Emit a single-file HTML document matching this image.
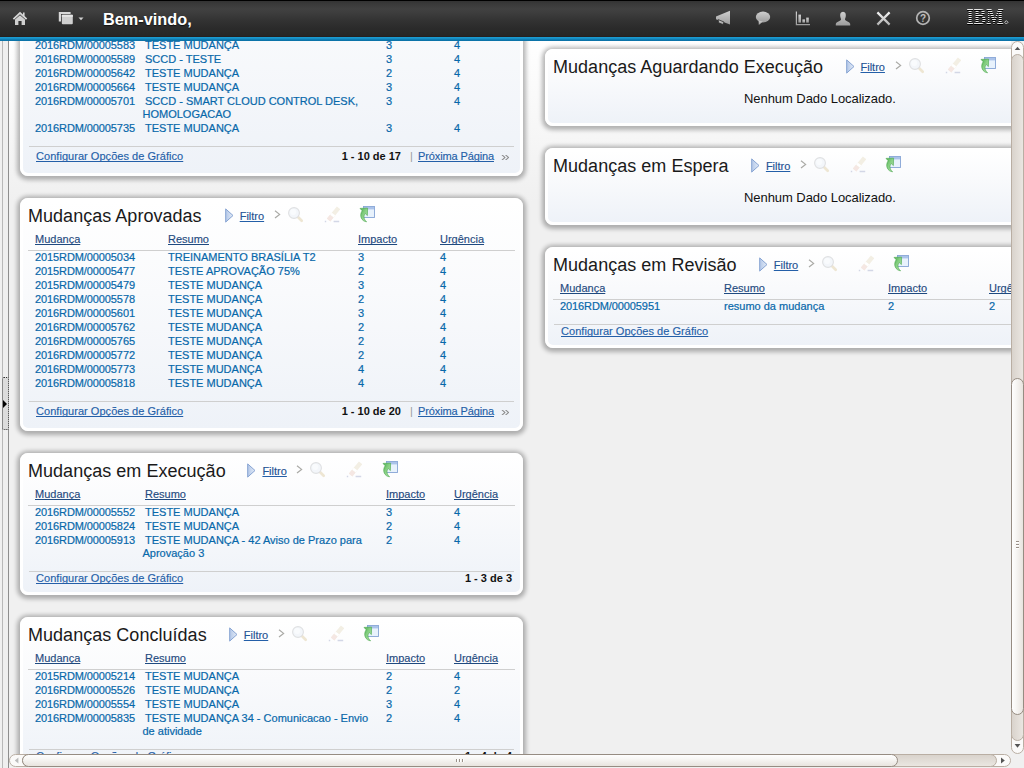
<!DOCTYPE html>
<html lang="pt-BR"><head><meta charset="utf-8"><title>Centro de Início</title>
<style>
*{box-sizing:border-box;margin:0;padding:0}
html,body{width:1024px;height:768px;overflow:hidden}
body{position:relative;text-decoration-skip-ink:none;font-family:"Liberation Sans",sans-serif;font-size:11px;color:#000;background:#f0f0f0}
#bg{position:absolute;left:0;top:41px;width:1024px;height:727px;background:linear-gradient(#fff 0,#f0f0f0 160px,#f0f0f0 100%)}
#hdr{position:absolute;left:0;top:0;width:1024px;height:41px;background:linear-gradient(#000 0,#000 1px,#333 1px,#3a3a3a 4px,#414141 9px,#3d3d3d 13px,#333 20px,#2b2b2b 28px,#262626 36px,#231f1f 36.7px,#1b9cd2 36.7px,#1a97cd 38px,#0e7db3 39.5px,#0a6fa3 41px);z-index:20}
#hdr .w{position:absolute;left:103px;top:9px;font-size:16.3px;font-weight:bold;color:#fff;text-shadow:0 1px 1px rgba(0,0,0,.6);line-height:20px;white-space:nowrap}
#hdr svg{position:absolute}
#strip{position:absolute;left:0;top:41px;width:9px;height:727px;background:linear-gradient(90deg,#f0f0f0 0,#f0f0f0 2px,#b8b8b8 2px,#b8b8b8 3px,#efefef 3px,#efefef 8px,#8e8e8e 8px,#8e8e8e 9px);z-index:5}
#grip{position:absolute;left:2px;top:377px;width:7px;height:53px;border:1px dotted #333;border-radius:2px;background:#dcdcdc;z-index:6}
#grip:after{content:"";position:absolute;left:0px;top:22px;border-left:4px solid #000;border-top:4px solid transparent;border-bottom:4px solid transparent}
.card{position:absolute;border:3px solid #fff;border-radius:8px;background:linear-gradient(#ffffff 0,#f9fafc 40%,#eef2f8 100%);box-shadow:0 1px 4px 2.5px rgba(0,0,0,.28)}
.card .t{position:relative;top:4px;flex:none;letter-spacing:.03px;font-size:18px;line-height:22px;color:#1a1a1a;white-space:nowrap}
.hd{position:absolute;left:5px;top:0;display:flex;white-space:nowrap}
.tb{position:absolute;top:5px;height:20px;width:160px}
.tb svg{position:absolute}
.tb a{position:absolute;left:15px;top:4px;font-size:11px;line-height:13px;color:#234f8e;text-decoration:underline}
a{color:#245fa8;text-decoration:underline;-webkit-text-stroke:.15px #245fa8}
.h{position:absolute;white-space:nowrap;line-height:13px;color:#1f4a80;text-decoration:underline;-webkit-text-stroke:.15px #1f4a80}
.c{position:absolute;white-space:nowrap;line-height:13px;color:#0868aa;-webkit-text-stroke:.2px #0868aa}
.c.id{letter-spacing:-.1px}
.sep{position:absolute;height:1px;background:#cfcfcf}
.f{position:absolute;white-space:nowrap;line-height:13px}
.fb{font-weight:bold;color:#111}
.nd{position:absolute;font-size:13px;line-height:15px;color:#111;white-space:nowrap;letter-spacing:-.06px}
#vs{position:absolute;left:1011px;top:41px;width:13px;height:713px;background:#f0f0f0;z-index:10}
#hs{position:absolute;left:9px;top:754px;width:1015px;height:14px;background:#f0f0f0;z-index:10}
</style></head>
<body>
<div id="bg"></div>
<div class="card" style="left:20px;top:-70px;width:503px;height:246px"><div class="c id" style="left:12px;top:106px">2016RDM/00005583</div><div class="c" style="left:122px;top:106px">TESTE MUDANÇA</div><div class="c" style="left:363px;top:106px">3</div><div class="c" style="left:431px;top:106px">4</div><div class="c id" style="left:12px;top:120px">2016RDM/00005589</div><div class="c" style="left:122px;top:120px">SCCD - TESTE</div><div class="c" style="left:363px;top:120px">3</div><div class="c" style="left:431px;top:120px">4</div><div class="c id" style="left:12px;top:134px">2016RDM/00005642</div><div class="c" style="left:122px;top:134px">TESTE MUDANÇA</div><div class="c" style="left:363px;top:134px">2</div><div class="c" style="left:431px;top:134px">4</div><div class="c id" style="left:12px;top:148px">2016RDM/00005664</div><div class="c" style="left:122px;top:148px">TESTE MUDANÇA</div><div class="c" style="left:363px;top:148px">3</div><div class="c" style="left:431px;top:148px">4</div><div class="c id" style="left:12px;top:162px">2016RDM/00005701</div><div class="c" style="left:122px;top:162px">SCCD - SMART CLOUD CONTROL DESK,</div><div class="c" style="left:119.5px;top:175px">HOMOLOGACAO</div><div class="c" style="left:363px;top:162px">3</div><div class="c" style="left:431px;top:162px">4</div><div class="c id" style="left:12px;top:189px">2016RDM/00005735</div><div class="c" style="left:122px;top:189px">TESTE MUDANÇA</div><div class="c" style="left:363px;top:189px">3</div><div class="c" style="left:431px;top:189px">4</div><div class="sep" style="left:6px;right:6px;top:213px"></div><div class="f" style="left:13px;top:217px;letter-spacing:.04px"><a>Configurar Opções de Gráfico</a></div><div class="f fb" style="right:119px;top:217px">1 - 10 de 17</div><div class="f" style="left:387px;top:217px;color:#9a9a9a">|</div><div class="f" style="left:395px;top:217px;letter-spacing:-.12px"><a>Próxima Página</a></div><div class="f" style="left:478px;top:217px;color:#8c8c8c;font-size:13px;transform:scaleX(1.2);transform-origin:0 0">»</div></div>
<div class="card" style="left:20px;top:198px;width:503px;height:233px"><div class="hd"><div class="t">Mudanças Aprovadas</div></div><div class="tb" style="left:201.7px"><svg style="left:0;top:2px" width="9" height="15" viewBox="0 0 9 15"><defs><linearGradient id="tg" x1="0" x2="1"><stop offset="0" stop-color="#b4c8e8"/><stop offset="1" stop-color="#e3ebf7"/></linearGradient></defs><path d="M0.7 0.9 L8 7.5 L0.7 14.1 Z" fill="url(#tg)" stroke="#86a3d2" stroke-width="1"/></svg><a>Filtro</a><svg style="left:49px;top:4px" width="7" height="9" viewBox="0 0 7 9"><path d="M1 0.8 L5.6 4.4 L1 8" fill="none" stroke="#aaaaa6" stroke-width="1.2"/></svg><svg style="left:62px;top:0px" width="17" height="17" viewBox="0 0 17 17"><path d="M11.2 11.2 L14.7 14.7" stroke="#eee6d3" stroke-width="2.7" stroke-linecap="round"/><circle cx="7" cy="7" r="5.4" fill="#f3f6fa" stroke="#dfe0e2" stroke-width="1.1"/><circle cx="6.2" cy="6" r="3" fill="#f9fbfd"/></svg><svg style="left:99px;top:-1px" width="16" height="18" viewBox="0 0 16 18"><path d="M4.6 15 L14.6 2.8" stroke="#f3efe4" stroke-width="4.4"/><path d="M4.6 15 L7.6 11.3" stroke="#f5e7e3" stroke-width="4.4"/><path d="M7.9 11 L9.5 9" stroke="#ffffff" stroke-width="4.4"/><path d="M0.8 16.6 H2.2 M9.6 16.6 H15.2" stroke="#d3d7e6" stroke-width="1.5"/></svg><svg style="left:134.5px;top:0px" width="17" height="18" viewBox="0 0 17 18"><defs><linearGradient id="gg" x1="0" x2="1" y1="0" y2="1"><stop offset="0" stop-color="#4daf50"/><stop offset=".45" stop-color="#86cf82"/><stop offset="1" stop-color="#b2e0ac"/></linearGradient></defs><rect x="4.5" y="0.5" width="11" height="11" fill="#e8f2fc" stroke="#86a4d6" stroke-width=".9"/><rect x="5" y="1" width="10" height="2.4" fill="#abc3ea"/><path d="M1 2.4 L8.6 2.1 L8.4 9.6 L6.3 7.6 C4.4 9.6 4.4 13 7.6 15.8 C2.6 15.4 -0.2 9.6 3.2 4.8 Z" fill="url(#gg)" stroke="#48a64c" stroke-width=".6"/></svg></div><div class="h" style="left:12px;top:32px">Mudança</div><div class="h" style="left:145px;top:32px">Resumo</div><div class="h" style="left:335px;top:32px">Impacto</div><div class="h" style="left:417px;top:32px">Urgência</div><div class="sep" style="left:5px;right:5px;top:49px"></div><div class="c id" style="left:12px;top:50px">2015RDM/00005034</div><div class="c" style="left:145px;top:50px">TREINAMENTO BRASÍLIA T2</div><div class="c" style="left:335px;top:50px">3</div><div class="c" style="left:417px;top:50px">4</div><div class="c id" style="left:12px;top:64px">2015RDM/00005477</div><div class="c" style="left:145px;top:64px">TESTE APROVAÇÃO 75%</div><div class="c" style="left:335px;top:64px">2</div><div class="c" style="left:417px;top:64px">4</div><div class="c id" style="left:12px;top:78px">2015RDM/00005479</div><div class="c" style="left:145px;top:78px">TESTE MUDANÇA</div><div class="c" style="left:335px;top:78px">3</div><div class="c" style="left:417px;top:78px">4</div><div class="c id" style="left:12px;top:92px">2016RDM/00005578</div><div class="c" style="left:145px;top:92px">TESTE MUDANÇA</div><div class="c" style="left:335px;top:92px">2</div><div class="c" style="left:417px;top:92px">4</div><div class="c id" style="left:12px;top:106px">2016RDM/00005601</div><div class="c" style="left:145px;top:106px">TESTE MUDANÇA</div><div class="c" style="left:335px;top:106px">3</div><div class="c" style="left:417px;top:106px">4</div><div class="c id" style="left:12px;top:120px">2016RDM/00005762</div><div class="c" style="left:145px;top:120px">TESTE MUDANÇA</div><div class="c" style="left:335px;top:120px">2</div><div class="c" style="left:417px;top:120px">4</div><div class="c id" style="left:12px;top:134px">2016RDM/00005765</div><div class="c" style="left:145px;top:134px">TESTE MUDANÇA</div><div class="c" style="left:335px;top:134px">2</div><div class="c" style="left:417px;top:134px">4</div><div class="c id" style="left:12px;top:148px">2016RDM/00005772</div><div class="c" style="left:145px;top:148px">TESTE MUDANÇA</div><div class="c" style="left:335px;top:148px">2</div><div class="c" style="left:417px;top:148px">4</div><div class="c id" style="left:12px;top:162px">2016RDM/00005773</div><div class="c" style="left:145px;top:162px">TESTE MUDANÇA</div><div class="c" style="left:335px;top:162px">4</div><div class="c" style="left:417px;top:162px">4</div><div class="c id" style="left:12px;top:176px">2016RDM/00005818</div><div class="c" style="left:145px;top:176px">TESTE MUDANÇA</div><div class="c" style="left:335px;top:176px">4</div><div class="c" style="left:417px;top:176px">4</div><div class="sep" style="left:6px;right:6px;top:200px"></div><div class="f" style="left:13px;top:204px;letter-spacing:.04px"><a>Configurar Opções de Gráfico</a></div><div class="f fb" style="right:119px;top:204px">1 - 10 de 20</div><div class="f" style="left:387px;top:204px;color:#9a9a9a">|</div><div class="f" style="left:395px;top:204px;letter-spacing:-.12px"><a>Próxima Página</a></div><div class="f" style="left:478px;top:204px;color:#8c8c8c;font-size:13px;transform:scaleX(1.2);transform-origin:0 0">»</div></div>
<div class="card" style="left:20px;top:453px;width:503px;height:142px"><div class="hd"><div class="t">Mudanças em Execução</div></div><div class="tb" style="left:224.4px"><svg style="left:0;top:2px" width="9" height="15" viewBox="0 0 9 15"><defs><linearGradient id="tg" x1="0" x2="1"><stop offset="0" stop-color="#b4c8e8"/><stop offset="1" stop-color="#e3ebf7"/></linearGradient></defs><path d="M0.7 0.9 L8 7.5 L0.7 14.1 Z" fill="url(#tg)" stroke="#86a3d2" stroke-width="1"/></svg><a>Filtro</a><svg style="left:49px;top:4px" width="7" height="9" viewBox="0 0 7 9"><path d="M1 0.8 L5.6 4.4 L1 8" fill="none" stroke="#aaaaa6" stroke-width="1.2"/></svg><svg style="left:62px;top:0px" width="17" height="17" viewBox="0 0 17 17"><path d="M11.2 11.2 L14.7 14.7" stroke="#eee6d3" stroke-width="2.7" stroke-linecap="round"/><circle cx="7" cy="7" r="5.4" fill="#f3f6fa" stroke="#dfe0e2" stroke-width="1.1"/><circle cx="6.2" cy="6" r="3" fill="#f9fbfd"/></svg><svg style="left:99px;top:-1px" width="16" height="18" viewBox="0 0 16 18"><path d="M4.6 15 L14.6 2.8" stroke="#f3efe4" stroke-width="4.4"/><path d="M4.6 15 L7.6 11.3" stroke="#f5e7e3" stroke-width="4.4"/><path d="M7.9 11 L9.5 9" stroke="#ffffff" stroke-width="4.4"/><path d="M0.8 16.6 H2.2 M9.6 16.6 H15.2" stroke="#d3d7e6" stroke-width="1.5"/></svg><svg style="left:134.5px;top:0px" width="17" height="18" viewBox="0 0 17 18"><defs><linearGradient id="gg" x1="0" x2="1" y1="0" y2="1"><stop offset="0" stop-color="#4daf50"/><stop offset=".45" stop-color="#86cf82"/><stop offset="1" stop-color="#b2e0ac"/></linearGradient></defs><rect x="4.5" y="0.5" width="11" height="11" fill="#e8f2fc" stroke="#86a4d6" stroke-width=".9"/><rect x="5" y="1" width="10" height="2.4" fill="#abc3ea"/><path d="M1 2.4 L8.6 2.1 L8.4 9.6 L6.3 7.6 C4.4 9.6 4.4 13 7.6 15.8 C2.6 15.4 -0.2 9.6 3.2 4.8 Z" fill="url(#gg)" stroke="#48a64c" stroke-width=".6"/></svg></div><div class="h" style="left:12px;top:32px">Mudança</div><div class="h" style="left:122px;top:32px">Resumo</div><div class="h" style="left:363px;top:32px">Impacto</div><div class="h" style="left:431px;top:32px">Urgência</div><div class="sep" style="left:5px;right:5px;top:49px"></div><div class="c id" style="left:12px;top:50px">2016RDM/00005552</div><div class="c" style="left:122px;top:50px">TESTE MUDANÇA</div><div class="c" style="left:363px;top:50px">3</div><div class="c" style="left:431px;top:50px">4</div><div class="c id" style="left:12px;top:64px">2016RDM/00005824</div><div class="c" style="left:122px;top:64px">TESTE MUDANÇA</div><div class="c" style="left:363px;top:64px">2</div><div class="c" style="left:431px;top:64px">4</div><div class="c id" style="left:12px;top:78px">2016RDM/00005913</div><div class="c" style="left:122px;top:78px">TESTE MUDANÇA - 42 Aviso de Prazo para</div><div class="c" style="left:119.5px;top:91px">Aprovação 3</div><div class="c" style="left:363px;top:78px">2</div><div class="c" style="left:431px;top:78px">4</div><div class="sep" style="left:6px;right:6px;top:115px"></div><div class="f" style="left:13px;top:116px;letter-spacing:.04px"><a>Configurar Opções de Gráfico</a></div><div class="f fb" style="right:8px;top:116px">1 - 3 de 3</div></div>
<div class="card" style="left:20px;top:617px;width:503px;height:156px"><div class="hd"><div class="t">Mudanças Concluídas</div></div><div class="tb" style="left:205.8px"><svg style="left:0;top:2px" width="9" height="15" viewBox="0 0 9 15"><defs><linearGradient id="tg" x1="0" x2="1"><stop offset="0" stop-color="#b4c8e8"/><stop offset="1" stop-color="#e3ebf7"/></linearGradient></defs><path d="M0.7 0.9 L8 7.5 L0.7 14.1 Z" fill="url(#tg)" stroke="#86a3d2" stroke-width="1"/></svg><a>Filtro</a><svg style="left:49px;top:4px" width="7" height="9" viewBox="0 0 7 9"><path d="M1 0.8 L5.6 4.4 L1 8" fill="none" stroke="#aaaaa6" stroke-width="1.2"/></svg><svg style="left:62px;top:0px" width="17" height="17" viewBox="0 0 17 17"><path d="M11.2 11.2 L14.7 14.7" stroke="#eee6d3" stroke-width="2.7" stroke-linecap="round"/><circle cx="7" cy="7" r="5.4" fill="#f3f6fa" stroke="#dfe0e2" stroke-width="1.1"/><circle cx="6.2" cy="6" r="3" fill="#f9fbfd"/></svg><svg style="left:99px;top:-1px" width="16" height="18" viewBox="0 0 16 18"><path d="M4.6 15 L14.6 2.8" stroke="#f3efe4" stroke-width="4.4"/><path d="M4.6 15 L7.6 11.3" stroke="#f5e7e3" stroke-width="4.4"/><path d="M7.9 11 L9.5 9" stroke="#ffffff" stroke-width="4.4"/><path d="M0.8 16.6 H2.2 M9.6 16.6 H15.2" stroke="#d3d7e6" stroke-width="1.5"/></svg><svg style="left:134.5px;top:0px" width="17" height="18" viewBox="0 0 17 18"><defs><linearGradient id="gg" x1="0" x2="1" y1="0" y2="1"><stop offset="0" stop-color="#4daf50"/><stop offset=".45" stop-color="#86cf82"/><stop offset="1" stop-color="#b2e0ac"/></linearGradient></defs><rect x="4.5" y="0.5" width="11" height="11" fill="#e8f2fc" stroke="#86a4d6" stroke-width=".9"/><rect x="5" y="1" width="10" height="2.4" fill="#abc3ea"/><path d="M1 2.4 L8.6 2.1 L8.4 9.6 L6.3 7.6 C4.4 9.6 4.4 13 7.6 15.8 C2.6 15.4 -0.2 9.6 3.2 4.8 Z" fill="url(#gg)" stroke="#48a64c" stroke-width=".6"/></svg></div><div class="h" style="left:12px;top:32px">Mudança</div><div class="h" style="left:122px;top:32px">Resumo</div><div class="h" style="left:363px;top:32px">Impacto</div><div class="h" style="left:431px;top:32px">Urgência</div><div class="sep" style="left:5px;right:5px;top:49px"></div><div class="c id" style="left:12px;top:50px">2015RDM/00005214</div><div class="c" style="left:122px;top:50px">TESTE MUDANÇA</div><div class="c" style="left:363px;top:50px">2</div><div class="c" style="left:431px;top:50px">4</div><div class="c id" style="left:12px;top:64px">2016RDM/00005526</div><div class="c" style="left:122px;top:64px">TESTE MUDANÇA</div><div class="c" style="left:363px;top:64px">2</div><div class="c" style="left:431px;top:64px">2</div><div class="c id" style="left:12px;top:78px">2016RDM/00005554</div><div class="c" style="left:122px;top:78px">TESTE MUDANÇA</div><div class="c" style="left:363px;top:78px">3</div><div class="c" style="left:431px;top:78px">4</div><div class="c id" style="left:12px;top:92px">2016RDM/00005835</div><div class="c" style="left:122px;top:92px">TESTE MUDANÇA 34 - Comunicacao - Envio</div><div class="c" style="left:119.5px;top:105px">de atividade</div><div class="c" style="left:363px;top:92px">2</div><div class="c" style="left:431px;top:92px">4</div><div class="sep" style="left:6px;right:6px;top:129px"></div><div class="f" style="left:13px;top:130px;letter-spacing:.04px"><a>Configurar Opções de Gráfico</a></div><div class="f fb" style="right:8px;top:130px">1 - 4 de 4</div></div>
<div class="card" style="left:545px;top:49px;width:551px;height:77px"><div class="hd"><div class="t">Mudanças Aguardando Execução</div></div><div class="tb" style="left:297.5px"><svg style="left:0;top:2px" width="9" height="15" viewBox="0 0 9 15"><defs><linearGradient id="tg" x1="0" x2="1"><stop offset="0" stop-color="#b4c8e8"/><stop offset="1" stop-color="#e3ebf7"/></linearGradient></defs><path d="M0.7 0.9 L8 7.5 L0.7 14.1 Z" fill="url(#tg)" stroke="#86a3d2" stroke-width="1"/></svg><a>Filtro</a><svg style="left:49px;top:4px" width="7" height="9" viewBox="0 0 7 9"><path d="M1 0.8 L5.6 4.4 L1 8" fill="none" stroke="#aaaaa6" stroke-width="1.2"/></svg><svg style="left:62px;top:0px" width="17" height="17" viewBox="0 0 17 17"><path d="M11.2 11.2 L14.7 14.7" stroke="#eee6d3" stroke-width="2.7" stroke-linecap="round"/><circle cx="7" cy="7" r="5.4" fill="#f3f6fa" stroke="#dfe0e2" stroke-width="1.1"/><circle cx="6.2" cy="6" r="3" fill="#f9fbfd"/></svg><svg style="left:99px;top:-1px" width="16" height="18" viewBox="0 0 16 18"><path d="M4.6 15 L14.6 2.8" stroke="#f3efe4" stroke-width="4.4"/><path d="M4.6 15 L7.6 11.3" stroke="#f5e7e3" stroke-width="4.4"/><path d="M7.9 11 L9.5 9" stroke="#ffffff" stroke-width="4.4"/><path d="M0.8 16.6 H2.2 M9.6 16.6 H15.2" stroke="#d3d7e6" stroke-width="1.5"/></svg><svg style="left:134.5px;top:0px" width="17" height="18" viewBox="0 0 17 18"><defs><linearGradient id="gg" x1="0" x2="1" y1="0" y2="1"><stop offset="0" stop-color="#4daf50"/><stop offset=".45" stop-color="#86cf82"/><stop offset="1" stop-color="#b2e0ac"/></linearGradient></defs><rect x="4.5" y="0.5" width="11" height="11" fill="#e8f2fc" stroke="#86a4d6" stroke-width=".9"/><rect x="5" y="1" width="10" height="2.4" fill="#abc3ea"/><path d="M1 2.4 L8.6 2.1 L8.4 9.6 L6.3 7.6 C4.4 9.6 4.4 13 7.6 15.8 C2.6 15.4 -0.2 9.6 3.2 4.8 Z" fill="url(#gg)" stroke="#48a64c" stroke-width=".6"/></svg></div><div class="nd" style="left:196px;top:39px">Nenhum Dado Localizado.</div></div>
<div class="card" style="left:545px;top:148px;width:551px;height:77px"><div class="hd"><div class="t">Mudanças em Espera</div></div><div class="tb" style="left:202.9px"><svg style="left:0;top:2px" width="9" height="15" viewBox="0 0 9 15"><defs><linearGradient id="tg" x1="0" x2="1"><stop offset="0" stop-color="#b4c8e8"/><stop offset="1" stop-color="#e3ebf7"/></linearGradient></defs><path d="M0.7 0.9 L8 7.5 L0.7 14.1 Z" fill="url(#tg)" stroke="#86a3d2" stroke-width="1"/></svg><a>Filtro</a><svg style="left:49px;top:4px" width="7" height="9" viewBox="0 0 7 9"><path d="M1 0.8 L5.6 4.4 L1 8" fill="none" stroke="#aaaaa6" stroke-width="1.2"/></svg><svg style="left:62px;top:0px" width="17" height="17" viewBox="0 0 17 17"><path d="M11.2 11.2 L14.7 14.7" stroke="#eee6d3" stroke-width="2.7" stroke-linecap="round"/><circle cx="7" cy="7" r="5.4" fill="#f3f6fa" stroke="#dfe0e2" stroke-width="1.1"/><circle cx="6.2" cy="6" r="3" fill="#f9fbfd"/></svg><svg style="left:99px;top:-1px" width="16" height="18" viewBox="0 0 16 18"><path d="M4.6 15 L14.6 2.8" stroke="#f3efe4" stroke-width="4.4"/><path d="M4.6 15 L7.6 11.3" stroke="#f5e7e3" stroke-width="4.4"/><path d="M7.9 11 L9.5 9" stroke="#ffffff" stroke-width="4.4"/><path d="M0.8 16.6 H2.2 M9.6 16.6 H15.2" stroke="#d3d7e6" stroke-width="1.5"/></svg><svg style="left:134.5px;top:0px" width="17" height="18" viewBox="0 0 17 18"><defs><linearGradient id="gg" x1="0" x2="1" y1="0" y2="1"><stop offset="0" stop-color="#4daf50"/><stop offset=".45" stop-color="#86cf82"/><stop offset="1" stop-color="#b2e0ac"/></linearGradient></defs><rect x="4.5" y="0.5" width="11" height="11" fill="#e8f2fc" stroke="#86a4d6" stroke-width=".9"/><rect x="5" y="1" width="10" height="2.4" fill="#abc3ea"/><path d="M1 2.4 L8.6 2.1 L8.4 9.6 L6.3 7.6 C4.4 9.6 4.4 13 7.6 15.8 C2.6 15.4 -0.2 9.6 3.2 4.8 Z" fill="url(#gg)" stroke="#48a64c" stroke-width=".6"/></svg></div><div class="nd" style="left:196px;top:39px">Nenhum Dado Localizado.</div></div>
<div class="card" style="left:545px;top:247px;width:551px;height:101px"><div class="hd"><div class="t">Mudanças em Revisão</div></div><div class="tb" style="left:210.8px"><svg style="left:0;top:2px" width="9" height="15" viewBox="0 0 9 15"><defs><linearGradient id="tg" x1="0" x2="1"><stop offset="0" stop-color="#b4c8e8"/><stop offset="1" stop-color="#e3ebf7"/></linearGradient></defs><path d="M0.7 0.9 L8 7.5 L0.7 14.1 Z" fill="url(#tg)" stroke="#86a3d2" stroke-width="1"/></svg><a>Filtro</a><svg style="left:49px;top:4px" width="7" height="9" viewBox="0 0 7 9"><path d="M1 0.8 L5.6 4.4 L1 8" fill="none" stroke="#aaaaa6" stroke-width="1.2"/></svg><svg style="left:62px;top:0px" width="17" height="17" viewBox="0 0 17 17"><path d="M11.2 11.2 L14.7 14.7" stroke="#eee6d3" stroke-width="2.7" stroke-linecap="round"/><circle cx="7" cy="7" r="5.4" fill="#f3f6fa" stroke="#dfe0e2" stroke-width="1.1"/><circle cx="6.2" cy="6" r="3" fill="#f9fbfd"/></svg><svg style="left:99px;top:-1px" width="16" height="18" viewBox="0 0 16 18"><path d="M4.6 15 L14.6 2.8" stroke="#f3efe4" stroke-width="4.4"/><path d="M4.6 15 L7.6 11.3" stroke="#f5e7e3" stroke-width="4.4"/><path d="M7.9 11 L9.5 9" stroke="#ffffff" stroke-width="4.4"/><path d="M0.8 16.6 H2.2 M9.6 16.6 H15.2" stroke="#d3d7e6" stroke-width="1.5"/></svg><svg style="left:134.5px;top:0px" width="17" height="18" viewBox="0 0 17 18"><defs><linearGradient id="gg" x1="0" x2="1" y1="0" y2="1"><stop offset="0" stop-color="#4daf50"/><stop offset=".45" stop-color="#86cf82"/><stop offset="1" stop-color="#b2e0ac"/></linearGradient></defs><rect x="4.5" y="0.5" width="11" height="11" fill="#e8f2fc" stroke="#86a4d6" stroke-width=".9"/><rect x="5" y="1" width="10" height="2.4" fill="#abc3ea"/><path d="M1 2.4 L8.6 2.1 L8.4 9.6 L6.3 7.6 C4.4 9.6 4.4 13 7.6 15.8 C2.6 15.4 -0.2 9.6 3.2 4.8 Z" fill="url(#gg)" stroke="#48a64c" stroke-width=".6"/></svg></div><div class="h" style="left:12px;top:32px">Mudança</div><div class="h" style="left:176px;top:32px">Resumo</div><div class="h" style="left:340px;top:32px">Impacto</div><div class="h" style="left:441px;top:32px">Urgência</div><div class="sep" style="left:5px;right:5px;top:49px"></div><div class="c id" style="left:12px;top:50px">2016RDM/00005951</div><div class="c" style="left:176px;top:50px">resumo da mudança</div><div class="c" style="left:340px;top:50px">2</div><div class="c" style="left:441px;top:50px">2</div><div class="sep" style="left:6px;right:6px;top:74px"></div><div class="f" style="left:13px;top:75px;letter-spacing:.04px"><a>Configurar Opções de Gráfico</a></div></div>
<div id="strip"></div><div id="grip"></div>
<div id="hdr"><svg width="0" height="0" style="left:0;top:0"><defs><linearGradient id="ig" x1="0" x2="0" y1="0" y2="1"><stop offset="0" stop-color="#cfcfcf"/><stop offset="1" stop-color="#9c9c9c"/></linearGradient><linearGradient id="ig2" x1="0" x2="0" y1="0" y2="1"><stop offset="0" stop-color="#f4f4f4"/><stop offset="1" stop-color="#b4b4b4"/></linearGradient></defs></svg><svg style="left:12px;top:11px" width="16" height="15" viewBox="0 0 16 15"><path d="M8 0.8 L0.8 7.6 L2 8.8 L8 3.2 L14 8.8 L15.2 7.6 L12.6 5.1 V1.6 H11 V3.6 Z" fill="#d6d6d6"/><path d="M3 8.6 L8 4.2 L13 8.6 V14 H9.6 V10 H6.4 V14 H3 Z" fill="#d0d0d0"/></svg><svg style="left:58px;top:11px" width="28" height="15" viewBox="0 0 28 15"><path d="M0.8 1 H12.6 V3 H3 V10.6 H0.8 Z" fill="#d8d8d8"/><rect x="3.8" y="3.8" width="11" height="9.4" rx="1" fill="#cfcfcf"/><rect x="3.8" y="3.8" width="11" height="2" fill="#e6e6e6"/><path d="M20.5 6.5 H25.5 L23 9.2 Z" fill="#d0d0d0"/></svg><div class="w">Bem-vindo,</div><svg style="left:715px;top:10px" width="17" height="16" viewBox="0 0 17 16"><path d="M15 0.8 V14.6 L3.4 10.2 L1 9.2 V6.6 Z" fill="url(#ig)"/><path d="M3.2 9.6 L9 12 L8 14.6 L3.6 12.8 Z" fill="url(#ig)" stroke="#2e2e2e" stroke-width=".8"/></svg><svg style="left:755px;top:11px" width="16" height="15" viewBox="0 0 16 15"><ellipse cx="8" cy="6" rx="7.2" ry="5.4" fill="url(#ig)"/><path d="M3.6 9.5 L3.8 14 L8 10.6 Z" fill="url(#ig)"/></svg><svg style="left:795px;top:11px" width="16" height="15" viewBox="0 0 16 15"><path d="M0.8 0.6 H2 V13 H15 V14.2 H0.8 Z" fill="url(#ig)"/><rect x="3.4" y="3.6" width="2.6" height="8" fill="url(#ig)"/><rect x="7.4" y="8.4" width="2.6" height="3.2" fill="url(#ig)"/><rect x="11.2" y="6.6" width="2.6" height="5" fill="url(#ig)"/></svg><svg style="left:835px;top:11px" width="16" height="15" viewBox="0 0 16 15"><path d="M8 0.8 C10.4 0.8 11 3 10.8 5 C10.6 6.8 10 7.6 10 8.4 C10 9.8 15 10.6 15.2 13 V14.4 H0.8 V13 C1 10.6 6 9.8 6 8.4 C6 7.6 5.4 6.8 5.2 5 C5 3 5.6 0.8 8 0.8 Z" fill="url(#ig)"/></svg><svg style="left:876px;top:11px" width="15" height="15" viewBox="0 0 15 15"><path d="M1.4 1.4 L13.6 13.6 M13.6 1.4 L1.4 13.6" stroke="url(#ig2)" stroke-width="2.2"/></svg><svg style="left:915px;top:10px" width="16" height="16" viewBox="0 0 16 16"><circle cx="8" cy="8" r="6.3" fill="none" stroke="#b4b4b4" stroke-width="1.7"/><text x="8" y="11.6" text-anchor="middle" font-family="Liberation Sans, sans-serif" font-weight="bold" font-size="10" fill="url(#ig)">?</text></svg><svg style="left:966px;top:8px" width="44" height="18" viewBox="0 0 44 18"><defs><mask id="m1" maskUnits="userSpaceOnUse" x="0" y="0" width="44" height="18"><rect x="0" y="1" width="40" height="1" fill="#fff"/><rect x="0" y="3" width="40" height="1" fill="#fff"/><rect x="0" y="5" width="40" height="1" fill="#fff"/><rect x="0" y="7" width="40" height="1" fill="#fff"/><rect x="0" y="9" width="40" height="1" fill="#fff"/><rect x="0" y="11" width="40" height="1" fill="#fff"/><rect x="0" y="13" width="40" height="1" fill="#fff"/><rect x="0" y="15" width="40" height="1" fill="#fff"/></mask><mask id="m2" maskUnits="userSpaceOnUse" x="0" y="0" width="44" height="18"><rect x="0" y="2" width="40" height="1" fill="#fff"/><rect x="0" y="4" width="40" height="1" fill="#fff"/><rect x="0" y="6" width="40" height="1" fill="#fff"/><rect x="0" y="8" width="40" height="1" fill="#fff"/><rect x="0" y="10" width="40" height="1" fill="#fff"/><rect x="0" y="12" width="40" height="1" fill="#fff"/><rect x="0" y="14" width="40" height="1" fill="#fff"/><rect x="0" y="16" width="40" height="1" fill="#fff"/></mask></defs><g mask="url(#m2)"><text x="0.6" y="17" font-family="Liberation Serif, serif" font-weight="bold" font-size="23" textLength="37" lengthAdjust="spacingAndGlyphs" fill="#000">IBM</text></g><g mask="url(#m1)"><text x="0.6" y="16" font-family="Liberation Serif, serif" font-weight="bold" font-size="23" textLength="37" lengthAdjust="spacingAndGlyphs" fill="#e6e6e6">IBM</text></g><path d="M40.3 12.6 L42 14.3 L40.3 16 L38.6 14.3 Z" fill="none" stroke="#d0d0d0" stroke-width=".9"/></svg></div>
<div id="vs"><svg width="13" height="713" viewBox="1 0 13 713"><defs><linearGradient id="tr" x1="0" x2="1"><stop offset="0" stop-color="#d8d2cb"/><stop offset="1" stop-color="#ebe7e2"/></linearGradient><linearGradient id="th" x1="0" x2="1"><stop offset="0" stop-color="#ffffff"/><stop offset=".35" stop-color="#f8f7f5"/><stop offset="1" stop-color="#e7e2dd"/></linearGradient></defs><rect x="1.5" y="0.5" width="12" height="712" rx="6" fill="#fbfaf9" stroke="#b9aea3"/><rect x="1.5" y="13.5" width="12" height="686" rx="6" fill="url(#tr)" stroke="#b9aea3"/><rect x="1.5" y="337.5" width="12" height="336" rx="6" fill="url(#th)" stroke="#968c82"/><path d="M4.7 9 L7.5 5.7 L10.3 9 Z" fill="#555"/><path d="M4.6 703 L7.5 706.8 L10.4 703 Z" fill="#555"/><rect x="6" y="500" width="3" height="1" fill="#9a9088"/><rect x="6" y="501" width="3" height="1" fill="#fff"/><rect x="6" y="503" width="3" height="1" fill="#9a9088"/><rect x="6" y="504" width="3" height="1" fill="#fff"/><rect x="6" y="506" width="3" height="1" fill="#9a9088"/><rect x="6" y="507" width="3" height="1" fill="#fff"/></svg></div>
<div id="hs"><svg width="1015" height="14" viewBox="9 0 1015 14"><defs><linearGradient id="trh" x1="0" x2="0" y1="0" y2="1"><stop offset="0" stop-color="#d8d2cb"/><stop offset="1" stop-color="#ebe7e2"/></linearGradient><linearGradient id="thh" x1="0" x2="0" y1="0" y2="1"><stop offset="0" stop-color="#ffffff"/><stop offset=".35" stop-color="#f8f7f5"/><stop offset="1" stop-color="#e7e2dd"/></linearGradient></defs><rect x="9.5" y="0.5" width="1001" height="12" rx="6" fill="#fbfaf9" stroke="#b9aea3"/><rect x="22.5" y="0.5" width="974" height="12" rx="6" fill="url(#trh)" stroke="#b9aea3"/><rect x="22.5" y="0.5" width="875" height="12" rx="6" fill="url(#thh)" stroke="#968c82"/><path d="M18.4 3.6 L14.8 6.5 L18.4 9.4 Z" fill="#bbb"/><path d="M1001 3.4 L1004.8 6.5 L1001 9.6 Z" fill="#555"/><rect x="456" y="5" width="1" height="3" fill="#9a9088"/><rect x="457" y="5" width="1" height="3" fill="#fff"/><rect x="459" y="5" width="1" height="3" fill="#9a9088"/><rect x="460" y="5" width="1" height="3" fill="#fff"/><rect x="462" y="5" width="1" height="3" fill="#9a9088"/><rect x="463" y="5" width="1" height="3" fill="#fff"/></svg></div>
</body></html>
